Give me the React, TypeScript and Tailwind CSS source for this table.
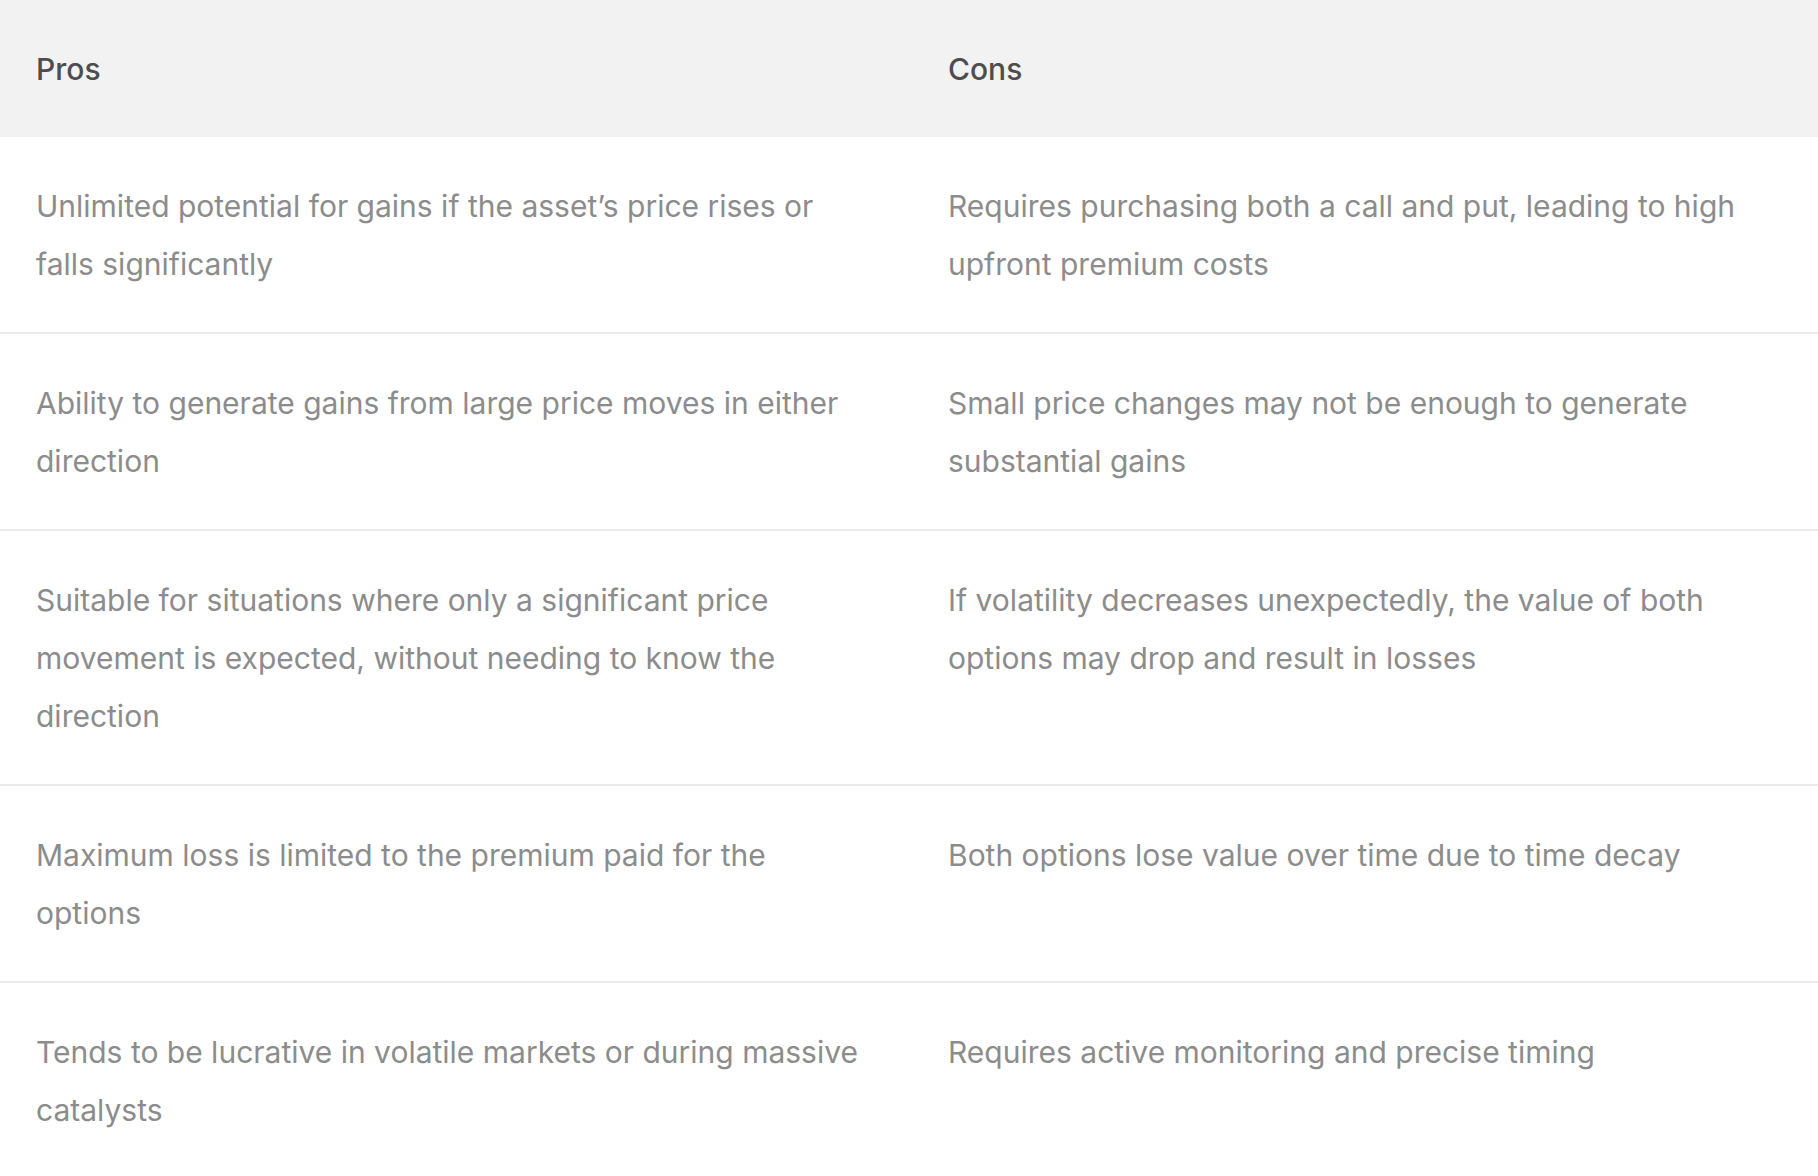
const rows: [string, string][] = [
  [
    'Unlimited potential for gains if the asset’s price rises or falls significantly',
    'Requires purchasing both a call and put, leading to high upfront premium costs',
  ],
  [
    'Ability to generate gains from large price moves in either direction',
    'Small price changes may not be enough to generate substantial gains',
  ],
  [
    'Suitable for situations where only a significant price movement is expected, without needing to know the direction',
    'If volatility decreases unexpectedly, the value of both options may drop and result in losses',
  ],
  [
    'Maximum loss is limited to the premium paid for the options',
    'Both options lose value over time due to time decay',
  ],
  [
    'Tends to be lucrative in volatile markets or during massive catalysts',
    'Requires active monitoring and precise timing',
  ],
];

export default function App() {
  return (
    <div className="min-h-screen bg-white font-['Inter',sans-serif]">
      <table className="w-full table-fixed border-collapse">
        <colgroup>
          <col className="w-[912px]" />
          <col />
        </colgroup>
        <thead>
          <tr className="bg-[#f2f2f2]">
            <th className="px-9 pt-10 pb-[39px] text-left text-[30px] font-medium leading-[58px] text-[#4d4d4d]">Pros</th>
            <th className="px-9 pt-10 pb-[39px] text-left text-[30px] font-medium leading-[58px] text-[#4d4d4d]">Cons</th>
          </tr>
        </thead>
        <tbody>
          {rows.map(([pro, con], i) => (
            <tr key={i} className={i < rows.length - 1 ? 'border-b-2 border-[#ebebeb]' : ''}>
              <td className="px-9 pt-10 pb-[39px] align-top text-[30px] leading-[58px] text-[#8c8c8c]">{pro}</td>
              <td className="px-9 pt-10 pb-[39px] align-top text-[30px] leading-[58px] text-[#8c8c8c]">{con}</td>
            </tr>
          ))}
        </tbody>
      </table>
    </div>
  );
}
